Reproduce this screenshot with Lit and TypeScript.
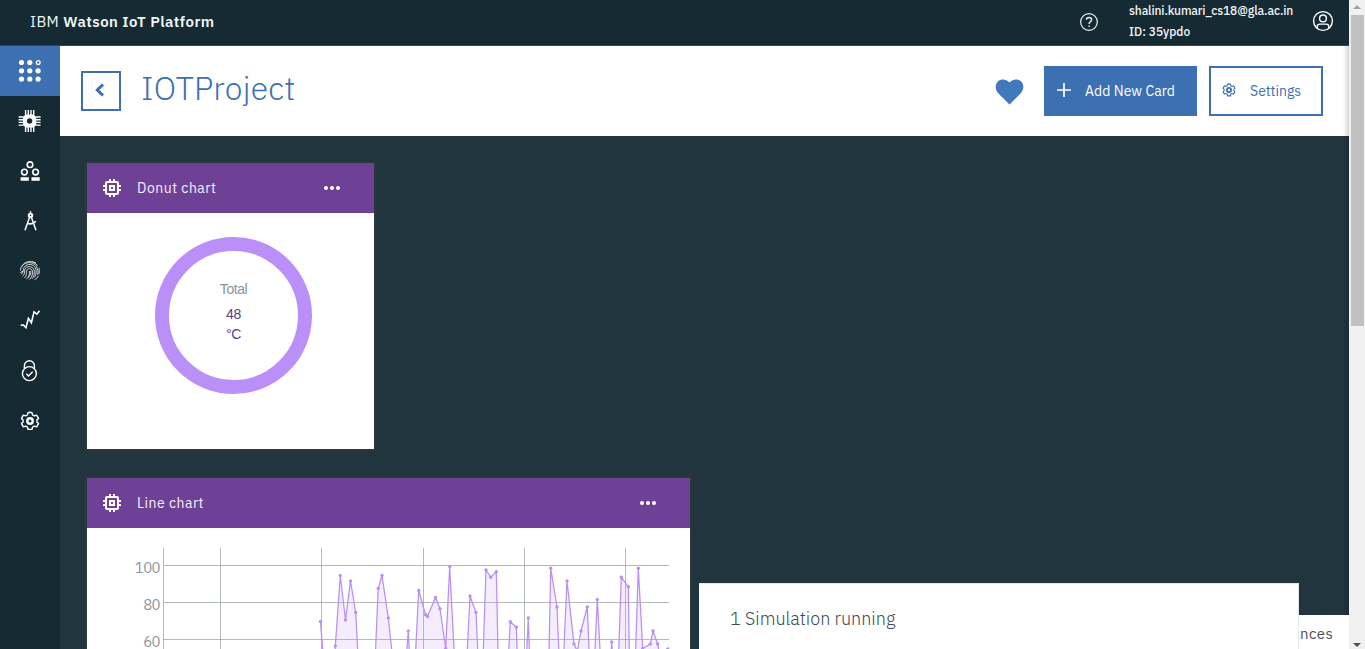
import { LitElement, html, svg, css } from "lit";
import { customElement, property } from "lit/decorators.js";

const gearPath =
  "M10 1.2 12 1.6 12.6 4 14.2 4.9 16.6 4.2 18.5 7.4 16.9 9.1V10.9L18.5 12.6 16.6 15.8 14.2 15.1 12.6 16 12 18.4H8L7.4 16 5.8 15.1 3.4 15.8 1.5 12.6 3.1 10.9V9.1L1.5 7.4 3.4 4.2 5.8 4.9 7.4 4 8 1.6Z";

const fingerprint = svg`<g transform="translate(-.5 -.8)" fill="none" stroke="#fff" stroke-width=".95" opacity=".85">
  <path d="M2 6.6C5 .4 14 -.8 18 5.6M1 10.5C1 2 13-.5 17 6.5 18.6 9.5 18.7 12 18 14.5M1.6 14C5.5 12 1.8 7.5 7.3 4.8 12 2.8 16.6 6 16.6 11 16.6 13.5 16 15.5 15.2 17M3 16C6.5 13.5 4 10.5 6 8 8.5 5 14.6 6 14.8 11.5 14.8 14.5 14 17 12.6 18.6M4.8 17.8C8.5 14.5 5.8 12 7.5 9.7 9.3 7.2 13 8.5 13 12 13 15 12 17.5 10 19.3M7 19C9.6 16.5 10.3 14 9.8 10.8M8.6 17.3C11 15 11.6 13 11.2 11M19.4 7.5C20 10 20 12 19.3 14M.8 12.4 3.6 11M16.5 3 13 1.4M15 19.5C17 18.5 18.3 17 19 15.5"/></g>`;

const glyphs: Record<string, unknown> = {
  boards: svg`<g transform="translate(-.5 -1)">${[0, 1, 2].map((r) =>
    [0, 1, 2].map((c) =>
      r === 0 && c === 2
        ? svg`<circle cx="18.7" cy="2.5" r="1.9" fill="none" stroke="#fff" stroke-width="1.3"/>`
        : svg`<circle cx=${2 + c * 8.3} cy=${2.5 + r * 8.3} r="2.6" fill="#fff"/>`
    )
  )}</g>`,
  devices: svg`<g transform="translate(-.4 0)"><path fill="#fff" fill-rule="evenodd" d="M6 3.4h8L16.6 6v8L14 16.6H6L3.4 14V6zM10 7.3a2.7 2.7 0 1 0 0 5.4 2.7 2.7 0 0 0 0-5.4z"/><path stroke="#fff" stroke-width="1.4" d="M6-1V4M8.7-1V4M11.4-1V4M14.1-1V4M6 16v5M8.7 16v5M11.4 16v5M14.1 16v5M-1 6H4M-1 8.7H4M-1 11.4H4M-1 14.1H4M16 6h5M16 8.7h5M16 11.4h5M16 14.1h5"/></g>`,
  members: svg`<g fill="none" stroke="#fff" stroke-width="1.6"><circle cx="10" cy="3.7" r="2.8"/><circle cx="4.4" cy="11.1" r="2.8"/><circle cx="15.6" cy="11.1" r="2.8"/></g><path fill="#fff" d="M.6 16.2h8.2v3.6h-8.2zM11.5 16.2h8.2v3.6h-8.2z"/>`,
  compass: svg`<g fill="none" stroke="#fff"><path stroke-width="1.5" d="M10.5.2v3M9.5 6.5 5 19.3M11.5 6.5 16 19.3M7.4 12.2c3 1.3 6 .6 8.6-2"/><circle cx="10.5" cy="4.5" r="1.7" stroke-width="2"/></g>`,
  finger: fingerprint,
  usage: svg`<path transform="translate(0 -1.2)" fill="none" stroke="#fff" stroke-width="1.6" d="M.6 15.7 3.2 15 6 17.8 8.4 8.6 11.4 13 14 2 17 4.4 19.5 1"/>`,
  security: svg`<g transform="translate(0 -1)" fill="none" stroke="#fff" stroke-width="1.4"><circle cx="9.4" cy="13.6" r="7"/><path d="M4.4 8.4V5.6a5 4.8 0 0 1 10 0v2.8M6.3 13.7l2.2 2.3 4.2-4.2"/></g>`,
  settings: svg`<path d=${gearPath} fill="none" stroke="#fff" stroke-width="1.4" stroke-linejoin="round"/><circle cx="10" cy="10" r="2.7" fill="none" stroke="#fff" stroke-width="2.4"/>`,
};

const chip = svg`<g fill="none" stroke="#fff"><rect x="3" y="3" width="12" height="12" rx="1" stroke-width="2"/><rect x="7" y="7" width="4" height="4" stroke-width="2"/><path stroke-width="2" d="M7 0v3M11 0v3M7 15v3M11 15v3M0 7h3M0 11h3M15 7h3M15 11h3"/></g>`;

@customElement("dash-card")
class DashCard extends LitElement {
  @property() heading = "";
  static styles = css`
    :host { display: block; background: #fff; box-shadow: 0 0 0 2px #2e3737; }
    .bar { height: 50px; box-sizing: border-box; background: #6f4196; display: flex; align-items: center; padding: 0 34px 0 16px; }
    .title { margin-left: 16px; flex: 1; color: #f4effa; font: 400 14px/20px "IBM Plex Sans", Roboto, sans-serif; letter-spacing: 0.5px; }
    svg { display: block; }
  `;
  render() {
    return html`<div class="bar">
        <svg width="18" height="18" viewBox="0 0 18 18">${chip}</svg>
        <div class="title">${this.heading}</div>
        <svg width="16" height="4" viewBox="0 0 16 4" fill="#fff"><circle cx="2" cy="2" r="2"/><circle cx="8" cy="2" r="2"/><circle cx="14" cy="2" r="2"/></svg>
      </div>
      <slot></slot>`;
  }
}

/* Samples in chart pixels; the third item marks a sample that has a dot. */
const samples: [number, number, number?][] = [
  [320.5, 621.5, 1], [326, 690], [333, 690], [335.3, 646, 1], [340.3, 575.5, 1], [345.5, 620, 1], [350.5, 581, 1],
  [355.7, 612.5, 1], [360.7, 705], [373.2, 705], [378.2, 588.5, 1], [382, 575.5, 1], [388.3, 618, 1], [395, 680],
  [403, 700], [408.3, 631, 1], [411.6, 700], [413.2, 700], [418.7, 590.5, 1], [425.5, 614.5, 1], [427.5, 616.5, 1],
  [435.5, 597.5, 1], [440, 608.7, 1], [445.7, 648.5, 1], [449.7, 566.5, 1], [456.7, 700], [464.8, 700], [470, 596, 1],
  [476, 612.5, 1], [480, 700], [481.6, 700], [486, 570, 1], [490.7, 577.3, 1], [496.3, 571.8, 1], [499, 700],
  [506, 700], [510.3, 621.7, 1], [516.3, 627.3, 1], [519, 700], [524.5, 700], [528.3, 618, 1], [531, 700],
  [548, 700], [550.7, 568.3, 1], [557, 607, 1], [561, 700], [561.6, 700], [567, 581, 1], [574, 644, 1], [577.3, 651],
  [581, 631, 1], [587.3, 607, 1], [591, 700], [592.6, 700], [597.3, 599.5, 1], [602.7, 700], [608, 700],
  [611.7, 642, 1], [615, 700], [617, 700], [621.3, 577.3, 1], [628.3, 586.7, 1], [630, 700], [634, 700],
  [638.3, 568.3, 1], [642.7, 648.5, 1], [650.3, 644, 1], [653, 631, 1], [657.7, 644, 1], [662, 668], [667.7, 649, 1],
];

@customElement("line-chart")
class LineChart extends LitElement {
  static styles = css`
    :host, svg { display: block; }
    text { font: 400 15px "IBM Plex Sans", Roboto, sans-serif; fill: #8c989d; letter-spacing: -0.6px; text-anchor: end; }
    .grid { stroke: #8c9696; stroke-opacity: 0.65; stroke-width: 1; }
    .area { fill: #ba8ff7; fill-opacity: 0.16; }
    .line { fill: none; stroke: #ba8ff7; stroke-width: 1.25; }
    .dot { fill: #ba8ff7; }
  `;
  render() {
    const pts = samples.map(([x, y]) => `${x},${y}`).join(" ");
    return html`<svg width="603" height="160" viewBox="87 528 603 160">
      <path class="grid" d="M163.5 548V688M220.5 548V688M321.5 548V688M423.5 548V688M524.5 548V688M625.5 548V688M163 565.5H669M163 602.5H669M163 639.5H669"/>
      <text x="160" y="573">100</text><text x="160" y="610">80</text><text x="160" y="647">60</text>
      <polygon class="area" points="320.5,710 ${pts} 667.7,710"/>
      <polyline class="line" points=${pts}/>
      ${samples.filter((s) => s[2]).map(([x, y]) => svg`<circle class="dot" cx=${x} cy=${y} r="1.7"/>`)}
    </svg>`;
  }
}

@customElement("app-root")
class AppRoot extends LitElement {
  static styles = css`
    :host { display: flex; width: 1365px; height: 649px; overflow: hidden; position: relative; font-family: "IBM Plex Sans", Roboto, sans-serif; background: #21353e; }
    svg { display: block; flex: none; overflow: visible; }
    .page { width: 1349px; height: 649px; display: flex; flex-direction: column; overflow: hidden; }
    .top { flex: none; height: 46px; box-sizing: border-box; background: #162a34; border-bottom: 1px solid #3a4649; display: flex; align-items: center; padding: 0 16px 2px 30px; color: #f2f5f6; }
    .brand { flex: 1; font: 400 15px/20px "IBM Plex Sans", Roboto, sans-serif; letter-spacing: 0.4px; }
    .brand b { font-weight: 600; letter-spacing: 0.45px; }
    .user { margin: 0 19px 0 31px; width: 165px; padding-bottom: 1px; font: 500 12px/21px "IBM Plex Sans", Roboto, sans-serif; white-space: nowrap; }
    .mail { letter-spacing: -0.12px; }
    .avatar { margin-bottom: 2px; }
    .body { flex: 1; display: flex; min-height: 0; }
    nav { width: 60px; flex: none; background: #162a34; }
    .item { height: 50px; display: flex; align-items: center; justify-content: center; }
    .item.active { background: #3d70b2; }
    main { flex: 1; }
    .head { height: 90px; box-sizing: border-box; background: #fff; display: flex; align-items: center; padding: 0 26px 0 21px; color: #3d70b2; }
    .back { box-sizing: border-box; width: 40px; height: 40px; border: 2px solid #3d70b2; display: flex; align-items: center; padding-left: 11px; padding-bottom: 3px; }
    h1 { flex: 1; margin: 0 0 7px 20px; font: 300 32px/40px "IBM Plex Sans", Roboto, sans-serif; letter-spacing: 0.25px; }
    .heart { margin-top: 2px; }
    .btn { box-sizing: border-box; height: 50px; border: 2px solid #3d70b2; display: flex; align-items: center; font: 400 14px/20px "IBM Plex Sans", Roboto, sans-serif; white-space: nowrap; }
    .add { width: 153px; margin: 0 12px 0 21px; padding-left: 11px; gap: 14px; background: #3d70b2; color: #fff; letter-spacing: 0.05px; }
    .btn svg { margin-bottom: 2px; }
    .add svg { margin-bottom: 3px; }
    .set { width: 114px; padding-left: 11px; gap: 14px; letter-spacing: 0; }
    .cards { padding: 27px; display: flex; flex-direction: column; gap: 29px; }
    .donut { width: 287px; height: 286px; }
    .line { width: 603px; height: 210px; }
    .donut-body { height: 236px; display: grid; grid-template: 157px / 157px; justify-content: center; padding: 24px 0 0 6px; box-sizing: border-box; }
    .ring { box-sizing: border-box; border: 14px solid #ba8ff7; border-radius: 50%; display: flex; flex-direction: column; align-items: center; padding-top: 28px; font: 400 14px/20px "Liberation Sans", Arial, sans-serif; letter-spacing: -0.4px; color: #5a3d8a; }
    .total { line-height: 21px; margin-bottom: 4px; letter-spacing: -0.45px; color: #8a9497; }
    .scroll { width: 16px; flex: none; height: 649px; background: #f1f1f1; display: flex; flex-direction: column; align-items: center; }
    .thumb { width: 13px; height: 311px; background: #c1c1c1; margin: 5px 0 auto 1px; }
    .up { margin-top: 5px; }
    .down { margin-bottom: 1px; }
    .edge { position: absolute; left: 1343px; top: 46px; width: 6px; height: 603px; background: linear-gradient(90deg, transparent, rgba(0, 0, 0, 0.16)); }
    .refs { position: absolute; left: 1299px; top: 615px; width: 50px; height: 34px; background: #fff; color: #4b5054; font: 400 15px/38px "IBM Plex Sans", Roboto, sans-serif; letter-spacing: 0.4px; box-sizing: border-box; padding-left: 1px; }
    .sim { position: absolute; left: 699px; top: 583px; width: 600px; height: 66px; box-sizing: border-box; background: #fff; border: 1px solid #dfe9e9; border-width: 1px 1px 0 0; padding: 22px 0 0 31px; font: 300 18px/26px "IBM Plex Sans", Roboto, sans-serif; color: #394b54; letter-spacing: 0; }
  `;
  render() {
    return html`<div class="page">
        <header class="top">
          <div class="brand">IBM <b>Watson IoT Platform</b></div>
          <svg width="18" height="18" viewBox="0 0 19 19" fill="none" stroke="#e8edef" stroke-width="1.3"><circle cx="9.5" cy="9.5" r="8.8"/><path stroke-width="1.5" d="M6.7 7.2C6.8 4 12.3 4 12.3 7.2 12.3 9.2 9.6 9 9.6 11.5M9.6 13.2v1.7"/></svg>
          <div class="user"><div class="mail">shalini.kumari_cs18@gla.ac.in</div><div>ID: 35ypdo</div></div>
          <svg class="avatar" width="20" height="20" viewBox="0 0 20 20" fill="none" stroke="#fff" stroke-width="1.4"><circle cx="10" cy="10" r="9.4"/><circle cx="10" cy="7.4" r="3.4"/><path d="M4.2 17v-1.3c0-1.6 1-2.6 2.6-2.6h6.4c1.6 0 2.6 1 2.6 2.6V17"/></svg>
        </header>
        <div class="body">
          <nav>
            ${Object.entries(glyphs).map(
              ([name, g]) => html`<div class="item ${name === "boards" ? "active" : ""}">
                <svg width="20" height="20" viewBox="0 0 20 20">${g}</svg>
              </div>`
            )}
          </nav>
          <main>
            <div class="head">
              <div class="back"><svg width="11" height="14" viewBox="0 0 11 14" fill="none" stroke="#3d70b2" stroke-width="3"><path d="M9 1.5 3.3 7 9 12.5"/></svg></div>
              <h1>IOTProject</h1>
              <svg class="heart" width="28" height="26" viewBox="-.5 0 28 26" fill="#4178be"><path d="M14 25.5 3.2 14.7C-.8 10.7-.6 5.3 2.4 2.5 5.6-.5 10.8.1 14 3.6 17.2.1 22.4-.5 25.6 2.5 28.6 5.3 28.8 10.7 24.8 14.7Z"/></svg>
              <div class="btn add"><svg width="14" height="14" viewBox="0 0 14 14"><path stroke="#fff" stroke-width="1.7" d="M7 0v14M0 7h14"/></svg><span>Add New Card</span></div>
              <div class="btn set"><svg width="14" height="14" viewBox="0 0 20 20" fill="none" stroke="#3d70b2"><path d=${gearPath} stroke-width="1.6"/><circle cx="10" cy="10" r="3" stroke-width="2.6"/></svg><span>Settings</span></div>
            </div>
            <div class="cards">
              <dash-card class="donut" heading="Donut chart">
                <div class="donut-body"><div class="ring"><div class="total">Total</div><div>48</div><div>°C</div></div></div>
              </dash-card>
              <dash-card class="line" heading="Line chart"><line-chart></line-chart></dash-card>
            </div>
          </main>
        </div>
      </div>
      <div class="scroll">
        <svg class="up" width="8" height="5" viewBox="0 0 8 5"><path fill="#a3a3a3" d="M4 0 8 4H0z"/></svg>
        <div class="thumb"></div>
        <svg class="down" width="8" height="5" viewBox="0 0 8 5"><path fill="#505050" d="M0 0h8L4 4z"/></svg>
      </div>
      <div class="edge"></div>
      <div class="refs">nces</div>
      <div class="sim">1 Simulation running</div>`;
  }
}
